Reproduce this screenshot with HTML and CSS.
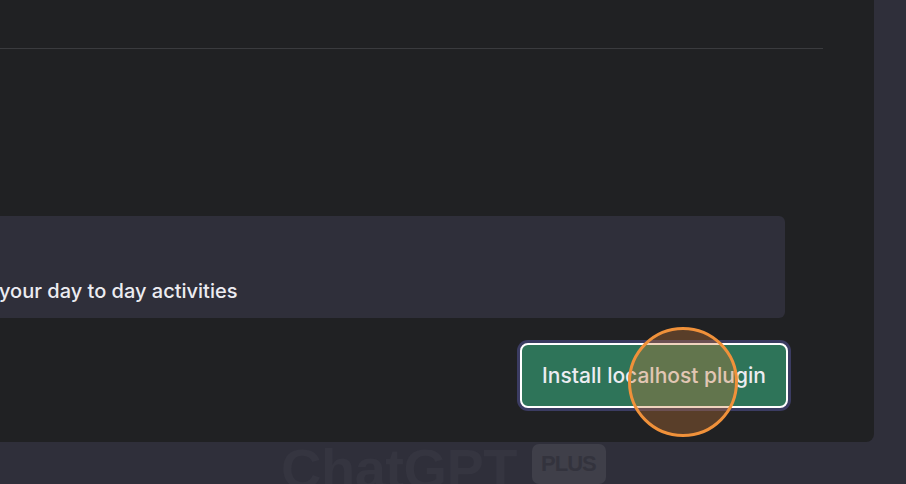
FILE: index.html
```html
<!DOCTYPE html>
<html>
<head>
<meta charset="utf-8">
<link rel="stylesheet" href="styles.css">
</head>
<body>
<div class="page">
  <div class="modal">
    <div class="modal-header"></div>
    <div class="plugin-card">
      <p class="plugin-desc">your day to day activities</p>
    </div>
    <div class="actions">
      <button class="install-btn">Install localhost plugin<span class="highlight"></span></button>
    </div>
  </div>
  <div class="brand">
    <span class="brand-name">ChatGPT</span>
    <span class="brand-badge">PLUS</span>
  </div>
</div>
</body>
</html>
```
FILE: styles.css
```css
html, body {
  margin: 0;
  padding: 0;
}
body {
  background: #2f2f3a;
  width: 906px;
  height: 484px;
  overflow: hidden;
  font-family: Inter, "Noto Sans", "Liberation Sans", sans-serif;
}
.page {
  display: flex;
  flex-direction: column;
  align-items: flex-start;
}
.modal {
  width: 874px;
  height: 442px;
  background: #202123;
  border-bottom-right-radius: 8px;
  display: flex;
  flex-direction: column;
  box-sizing: border-box;
}
.modal-header {
  height: 48px;
  width: 823px;
  border-bottom: 1px solid #3a3b3e;
  flex: none;
}
.plugin-card {
  margin-top: 167px;
  width: 785px;
  height: 102px;
  background: #2f2f3a;
  border-radius: 0 6px 6px 0;
  display: flex;
  align-items: flex-end;
  overflow: hidden;
  flex: none;
}
.plugin-desc {
  margin: 0 0 15px -1px;
  color: #ececf1;
  font-size: 20px;
  font-weight: 500;
  line-height: 24px;
  white-space: nowrap;
}
.actions {
  display: flex;
  justify-content: flex-end;
  width: 788px;
  margin-top: 25px;
}
.install-btn {
  position: relative;
  width: 268px;
  height: 65px;
  border: 2px solid #ffffff;
  border-radius: 8px;
  box-shadow: 0 0 0 3px #3b3c62;
  background: #2e7459;
  color: #ececf1;
  font-family: Inter, "Noto Sans", "Liberation Sans", sans-serif;
  font-size: 21px;
  font-weight: 500;
  padding: 0;
}
.highlight {
  position: absolute;
  left: 106px;
  top: -18px;
  width: 104px;
  height: 104px;
  border: 3px solid #f0913a;
  border-radius: 50%;
  background: rgba(205, 120, 55, 0.33);
}
.brand {
  display: flex;
  align-items: flex-start;
  gap: 15px;
  margin-left: 281px;
  margin-top: 0;
  height: 42px;
  overflow: visible;
}
.brand-name {
  font-family: "Liberation Sans", sans-serif;
  font-weight: 700;
  font-size: 56px;
  line-height: 55px;
  color: #353540;
  margin-top: -1px;
  letter-spacing: -0.5px;
}
.brand-badge {
  margin-top: 2px;
  background: #3f3f49;
  color: #33333d;
  font-family: "Liberation Sans", sans-serif;
  font-weight: 700;
  font-size: 22px;
  letter-spacing: -1px;
  line-height: 40px;
  padding: 0 10px 0 9px;
  border-radius: 7px;
}
```
